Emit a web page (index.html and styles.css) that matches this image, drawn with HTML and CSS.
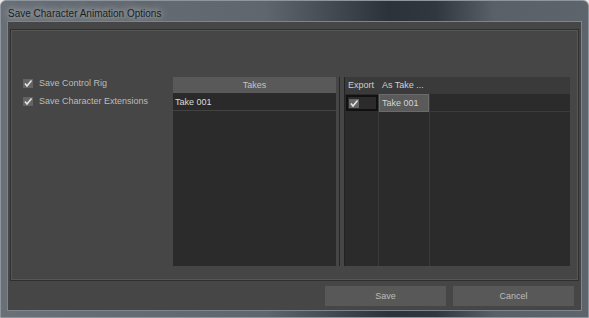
FILE: index.html
```html
<!DOCTYPE html>
<html lang="en">
<head>
  <meta charset="UTF-8">
  <title>Save Character Animation Options</title>
  <link rel="stylesheet" href="styles.css">
</head>
<body>
  <div class="window">
    <div class="titlebar">
      <span class="title">Save Character Animation Options</span>
    </div>
    <div class="client">
      <div class="group">
        <div class="options">
          <label class="check-row">
            <span class="checkbox"><svg viewBox="0 0 10 9" width="10" height="9"><path d="M2 4.5 L4 7 L8.5 1.5" fill="none" stroke="#e4e4e4" stroke-width="1.6"/></svg></span>
            Save Control Rig
          </label>
          <label class="check-row">
            <span class="checkbox"><svg viewBox="0 0 10 9" width="10" height="9"><path d="M2 4.5 L4 7 L8.5 1.5" fill="none" stroke="#e4e4e4" stroke-width="1.6"/></svg></span>
            Save Character Extensions
          </label>
        </div>

        <div class="takes-table">
          <div class="takes-head">Takes</div>
          <div class="takes-row">Take 001</div>
        </div>

        <div class="splitter"></div>

        <div class="export-table">
          <div class="col col-export">
            <div class="head">Export</div>
            <div class="cell cell-focus">
              <span class="checkbox"><svg viewBox="0 0 10 9" width="10" height="9"><path d="M2 4.5 L4 7 L8.5 1.5" fill="none" stroke="#e4e4e4" stroke-width="1.6"/></svg></span>
            </div>
          </div>
          <div class="col col-take">
            <div class="head">As Take ...</div>
            <div class="cell cell-selected">Take 001</div>
          </div>
          <div class="col col-rest">
            <div class="head"></div>
            <div class="cell"></div>
          </div>
        </div>
      </div>

      <div class="footer">
        <button class="button">Save</button>
        <button class="button">Cancel</button>
      </div>
    </div>
  </div>
</body>
</html>
```

FILE: styles.css
```css
/* Dialog window */
body {
  margin: 0;
  padding: 0;
  background-color: #e8e8e8;
  font-family: "Liberation Sans", Arial, sans-serif;
}
.window {
  width: 589px;
  height: 318px;
  box-sizing: border-box;
  padding: 0 7px 7px 7px;
  border: 1px solid #8f959c;
  border-radius: 6px 6px 0 0;
  background: linear-gradient(90deg, #6a7077 0%, #60666d 45%, #2b323a 66%, #30373f 74%, #5a6067 84%, #5e646b 100%);
  display: flex;
  flex-direction: column;
}
.titlebar {
  height: 21px;
  display: flex;
  align-items: center;
}
.title {
  font-size: 10px;
  color: #1c1c1c;
  padding-top: 4px;
  text-shadow: 0 0 6px rgba(210, 215, 220, 0.9), 0 0 10px rgba(200, 205, 210, 0.6);
}
.client {
  flex: 1;
  background-color: #454645;
  box-shadow: 0 0 0 1px #7f858c;
  display: flex;
  flex-direction: column;
  font-size: 9px;
  color: #bcbcbc;
}

/* Group box */
.group {
  height: 252px;
  box-sizing: border-box;
  margin: 7px 2px 0 2px;
  padding: 47px 8px 14px 12px;
  border: 1px solid #2e2f2e;
  box-shadow: inset 0 0 0 1px #555755;
  display: flex;
}
.options {
  width: 150px;
  margin-top: -3px;
}
.check-row {
  display: flex;
  align-items: center;
  gap: 6px;
  height: 18px;
}
.checkbox {
  width: 10px;
  height: 9px;
  background-color: #636463;
  display: flex;
}

/* Takes list */
.takes-table {
  width: 163px;
  background-color: #2b2b2b;
}
.takes-head {
  height: 16px;
  line-height: 16px;
  text-align: center;
  background-color: #585958;
  color: #c4c4c4;
  border-bottom: 1px solid #2b2b2b;
}
.takes-row {
  height: 16px;
  line-height: 16px;
  padding-left: 2px;
  color: #dadada;
  background-color: #2a2a2a;
  border-bottom: 1px solid #434343;
}
.splitter {
  width: 9px;
  box-sizing: border-box;
  border-left: 2px solid transparent;
  border-right: 1px solid #232323;
  background: linear-gradient(90deg, transparent 0, transparent 1px, #262626 1px, #262626 2px, transparent 2px);
}

/* Export table */
.export-table {
  flex: 1;
  display: flex;
  background-color: #2b2b2b;
}
.col {
  display: flex;
  flex-direction: column;
  border-right: 1px solid #3b3b3b;
}
.col-export {
  width: 33px;
}
.col-take {
  width: 50px;
}
.col-rest {
  flex: 1;
  border-right: none;
}
.head {
  height: 17px;
  line-height: 17px;
  padding-left: 3px;
  background-color: #3a3a3a;
  color: #cfcfcf;
  white-space: nowrap;
}
.cell {
  height: 17px;
  line-height: 17px;
  padding-left: 3px;
  color: #d4d4d4;
  border-bottom: 1px solid #3b3b3b;
}
.cell-focus {
  box-sizing: border-box;
  border: 2px solid #111;
  margin: 1px 0 0 1px;
  height: 16px;
  padding-left: 1px;
  display: flex;
  align-items: center;
}
.cell-selected {
  background-color: #595a59;
  border: 1px solid #6a6b6a;
  height: 16px;
  line-height: 16px;
  padding-left: 2px;
}

/* Bottom buttons */
.footer {
  display: flex;
  justify-content: flex-end;
  gap: 7px;
  padding: 5px 7px 0 0;
}
.button {
  width: 121px;
  height: 20px;
  border: none;
  background-color: #575857;
  color: #bdbdbd;
  font-family: "Liberation Sans", Arial, sans-serif;
  font-size: 9px;
  padding: 0;
}
```
